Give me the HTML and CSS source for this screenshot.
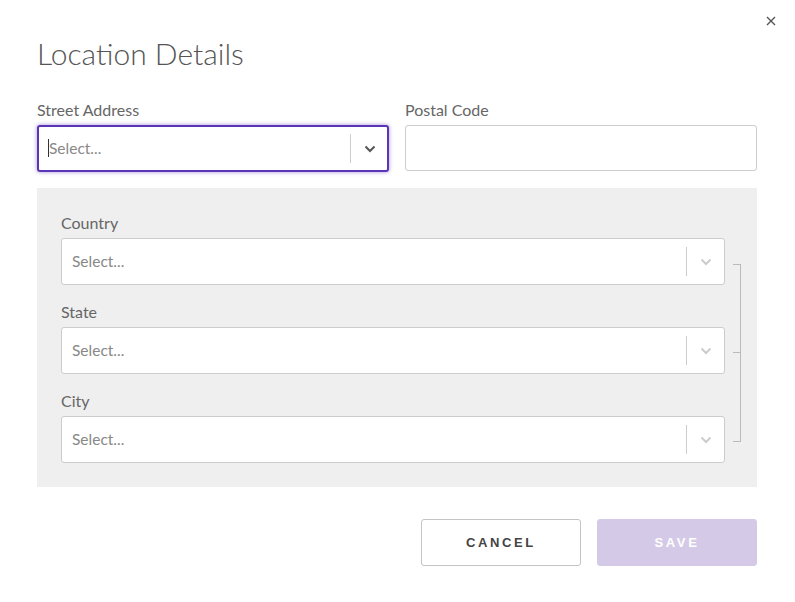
FILE: index.html
```html
<!DOCTYPE html>
<html>
<head>
<meta charset="utf-8">
<link rel="stylesheet" href="styles.css">
</head>
<body>
<div class="modal">
  <button class="close" aria-label="Close">
    <svg width="10" height="10" viewBox="0 0 10 10"><path d="M1 1L9 9M9 1L1 9" stroke="#555" stroke-width="1.4"/></svg>
  </button>
  <h1 class="title">Location Details</h1>
  <div class="row">
    <div class="field">
      <label class="label">Street Address</label>
      <div class="select focused">
        <div class="value"><span class="caret"></span>Select...</div>
        <div class="sep"></div>
        <div class="chev">
          <svg width="12" height="8" viewBox="0 0 12 8"><path d="M1.5 1.5L6 6L10.5 1.5" fill="none" stroke="#555" stroke-width="2"/></svg>
        </div>
      </div>
    </div>
    <div class="field">
      <label class="label">Postal Code</label>
      <div class="input"></div>
    </div>
  </div>
  <div class="panel">
    <div class="fields">
      <div class="pfield">
        <label class="label">Country</label>
        <div class="select">
          <div class="value">Select...</div>
          <div class="sep"></div>
          <div class="chev"><svg width="12" height="8" viewBox="0 0 12 8"><path d="M1.5 1.5L6 6L10.5 1.5" fill="none" stroke="#ccc" stroke-width="2"/></svg></div>
        </div>
      </div>
      <div class="pfield">
        <label class="label">State</label>
        <div class="select">
          <div class="value">Select...</div>
          <div class="sep"></div>
          <div class="chev"><svg width="12" height="8" viewBox="0 0 12 8"><path d="M1.5 1.5L6 6L10.5 1.5" fill="none" stroke="#ccc" stroke-width="2"/></svg></div>
        </div>
      </div>
      <div class="pfield">
        <label class="label">City</label>
        <div class="select">
          <div class="value">Select...</div>
          <div class="sep"></div>
          <div class="chev"><svg width="12" height="8" viewBox="0 0 12 8"><path d="M1.5 1.5L6 6L10.5 1.5" fill="none" stroke="#ccc" stroke-width="2"/></svg></div>
        </div>
      </div>
    </div>
    <div class="bracket-col"><div class="bracket"></div></div>
  </div>
  <div class="actions">
    <button class="btn cancel">CANCEL</button>
    <button class="btn save">SAVE</button>
  </div>
</div>
</body>
</html>
```
FILE: styles.css
```css
* { box-sizing: border-box; }
html, body { margin: 0; padding: 0; background: #fff; }
body { font-family: Lato, "Open Sans", sans-serif; color: #555; }
.modal { position: relative; width: 795px; height: 602px; padding: 36px 38px 0 37px; }
.close { position: absolute; top: 16px; right: 19px; width: 10px; height: 10px; padding: 0; border: 0; background: none; display: flex; }
.title { margin: 0; font-size: 30px; font-weight: 300; line-height: 34px; color: #555; letter-spacing: 0; }
.row { display: flex; gap: 16px; margin-top: 31px; }
.field { flex: 1; display: flex; flex-direction: column; }
.label { display: block; font-size: 16px; line-height: 18px; color: #666; margin-bottom: 6px; }
.input { height: 46px; border: 1px solid #ccc; border-radius: 3px; background: #fff; }
.select { display: flex; align-items: center; height: 47px; border: 1px solid #ccc; border-radius: 3px; background: #fff; }
.select.focused { border: 2px solid #5b35b5; box-shadow: 0 0 4px rgba(91, 53, 181, 0.55); }
.value { flex: 1; padding-left: 10px; padding-bottom: 1px; font-size: 15.5px; color: #888; display: flex; align-items: center; }
.focused .value { padding-left: 9px; }
.caret { display: inline-block; width: 1px; height: 18px; background: #333; margin-right: 0; }
.sep { width: 1px; height: 29px; background: #ccc; }
.chev { width: 37px; display: flex; justify-content: center; align-items: center; }
.focused .chev { width: 36px; padding-left: 1px; }
.panel { display: flex; margin-top: 16px; background: #efefef; padding: 26px 0 24px 24px; }
.fields { flex: 1; display: flex; flex-direction: column; gap: 18px; }
.bracket-col { width: 32px; padding: 50px 0 0 8px; }
.bracket { position: relative; width: 8px; height: 178px; border: 1px solid #bbb; border-left: 0; }
.bracket::after { content: ""; position: absolute; left: 0; top: 87px; width: 7px; height: 1px; background: #bbb; }
.actions { display: flex; justify-content: flex-end; gap: 16px; margin-top: 32px; }
.btn { width: 160px; height: 47px; border-radius: 3px; font-family: "Liberation Sans", Arial, sans-serif; font-weight: bold; font-size: 13px; letter-spacing: 2.6px; }
.cancel { background: #fff; border: 1px solid #c4c4c4; color: #444; }
.save { background: #d4cae8; border: 1px solid #d4cae8; color: #fff; }
```
